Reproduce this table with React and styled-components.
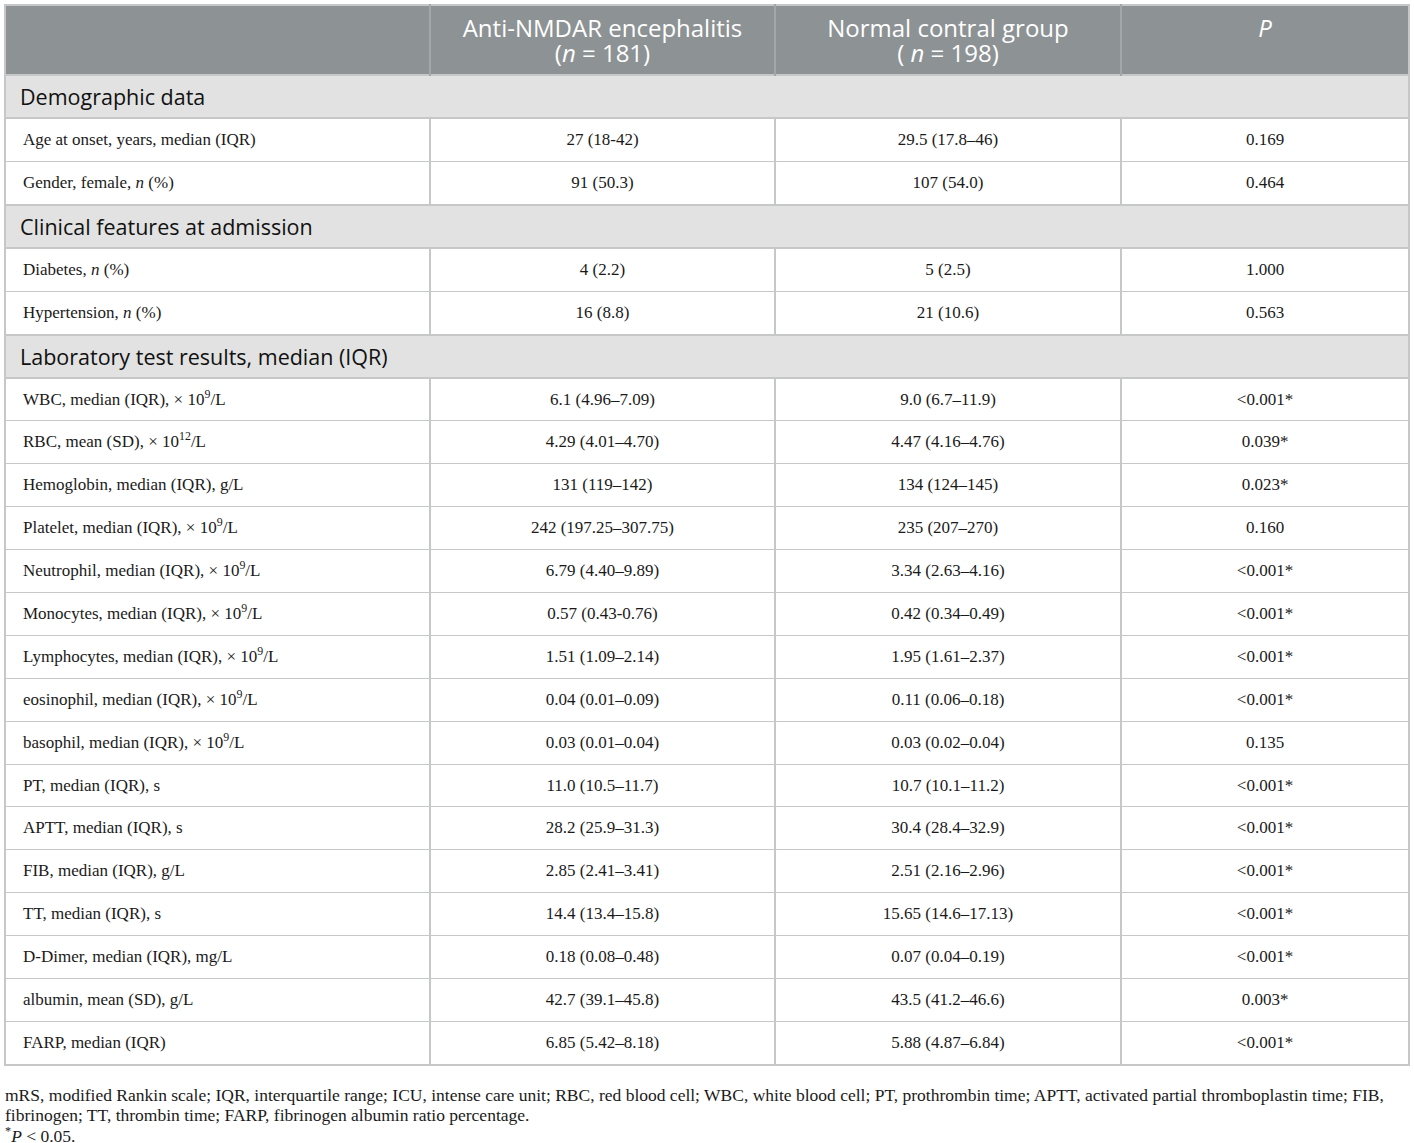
import React from "react";
import styled, { createGlobalStyle } from "styled-components";

const GlobalStyle = createGlobalStyle`
  html, body {
    margin: 0;
    padding: 0;
    background: #fff;
  }
`;

const Page = styled.div`
  padding: 4px 6px 0 4px;
  width: 1404px;
  font-family: "Liberation Serif", "Times New Roman", serif;
  color: #1a1a1a;
`;

const Table = styled.table`
  width: 1404px;
  border-collapse: collapse;
  table-layout: fixed;
  border: 2px solid #c6c8c7;
`;

const HeadCell = styled.th`
  background: #8d9295;
  color: #fff;
  font-family: "Open Sans", "Noto Sans", sans-serif;
  font-weight: 400;
  font-size: 24px;
  line-height: 25px;
  height: 70px;
  padding: 0 8px;
  text-align: center;
  vertical-align: top;
  padding-top: 9px;
  box-sizing: border-box;
  border-left: 2px solid #a3a7a9;
  &:first-child {
    border-left: none;
  }
`;

const SectionCell = styled.td`
  background: #e1e2e1;
  font-family: "Open Sans", "Noto Sans", sans-serif;
  font-size: 21.5px;
  color: #111;
  height: 41px;
  padding: 0 0 0 14px;
  border-top: 2px solid #c6c8c7;
  border-bottom: 2px solid #c6c8c7;
`;

const Cell = styled.td`
  height: 41.9px;
  font-size: 17px;
  padding: ${(p) => (p.$left ? "0 0 0 17px" : "0")};
  text-align: ${(p) => (p.$left ? "left" : "center")};
  border: 2px solid #c6c8c7;
  border-top-width: 1.5px;
  border-bottom-width: 1.5px;
  white-space: nowrap;
`;

const Sup = styled.sup`
  font-size: 0.7em;
  line-height: 0;
`;

const Footer = styled.div`
  margin-top: 19px;
  padding-left: 1px;
  font-size: 17.5px;
  line-height: 20.5px;
  color: #1a1a1a;
`;

const N = () => <i>n</i>;
const Pow = ({ e }) => (
  <>
    10<Sup>{e}</Sup>
  </>
);

const sections = [
  {
    title: "Demographic data",
    rows: [
      ["Age at onset, years, median (IQR)", "27 (18-42)", "29.5 (17.8–46)", "0.169"],
      [<>Gender, female, <N /> (%)</>, "91 (50.3)", "107 (54.0)", "0.464"],
    ],
  },
  {
    title: "Clinical features at admission",
    rows: [
      [<>Diabetes, <N /> (%)</>, "4 (2.2)", "5 (2.5)", "1.000"],
      [<>Hypertension, <N /> (%)</>, "16 (8.8)", "21 (10.6)", "0.563"],
    ],
  },
  {
    title: "Laboratory test results, median (IQR)",
    rows: [
      [<>WBC, median (IQR), × <Pow e="9" />/L</>, "6.1 (4.96–7.09)", "9.0 (6.7–11.9)", "<0.001*"],
      [<>RBC, mean (SD), × <Pow e="12" />/L</>, "4.29 (4.01–4.70)", "4.47 (4.16–4.76)", "0.039*"],
      ["Hemoglobin, median (IQR), g/L", "131 (119–142)", "134 (124–145)", "0.023*"],
      [<>Platelet, median (IQR), × <Pow e="9" />/L</>, "242 (197.25–307.75)", "235 (207–270)", "0.160"],
      [<>Neutrophil, median (IQR), × <Pow e="9" />/L</>, "6.79 (4.40–9.89)", "3.34 (2.63–4.16)", "<0.001*"],
      [<>Monocytes, median (IQR), × <Pow e="9" />/L</>, "0.57 (0.43-0.76)", "0.42 (0.34–0.49)", "<0.001*"],
      [<>Lymphocytes, median (IQR), × <Pow e="9" />/L</>, "1.51 (1.09–2.14)", "1.95 (1.61–2.37)", "<0.001*"],
      [<>eosinophil, median (IQR), × <Pow e="9" />/L</>, "0.04 (0.01–0.09)", "0.11 (0.06–0.18)", "<0.001*"],
      [<>basophil, median (IQR), × <Pow e="9" />/L</>, "0.03 (0.01–0.04)", "0.03 (0.02–0.04)", "0.135"],
      ["PT, median (IQR), s", "11.0 (10.5–11.7)", "10.7 (10.1–11.2)", "<0.001*"],
      ["APTT, median (IQR), s", "28.2 (25.9–31.3)", "30.4 (28.4–32.9)", "<0.001*"],
      ["FIB, median (IQR), g/L", "2.85 (2.41–3.41)", "2.51 (2.16–2.96)", "<0.001*"],
      ["TT, median (IQR), s", "14.4 (13.4–15.8)", "15.65 (14.6–17.13)", "<0.001*"],
      ["D-Dimer, median (IQR), mg/L", "0.18 (0.08–0.48)", "0.07 (0.04–0.19)", "<0.001*"],
      ["albumin, mean (SD), g/L", "42.7 (39.1–45.8)", "43.5 (41.2–46.6)", "0.003*"],
      ["FARP, median (IQR)", "6.85 (5.42–8.18)", "5.88 (4.87–6.84)", "<0.001*"],
    ],
  },
];

function App() {
  return (
    <Page>
      <GlobalStyle />
      <Table>
        <colgroup>
          <col style={{ width: "425px" }} />
          <col style={{ width: "345px" }} />
          <col style={{ width: "346px" }} />
          <col style={{ width: "288px" }} />
        </colgroup>
        <thead>
          <tr>
            <HeadCell />
            <HeadCell>
              Anti-NMDAR encephalitis
              <br />(<i>n</i> = 181)
            </HeadCell>
            <HeadCell>
              Normal contral group
              <br />( <i>n</i> = 198)
            </HeadCell>
            <HeadCell>
              <i>P</i>
            </HeadCell>
          </tr>
        </thead>
        <tbody>
          {sections.map((section) => (
            <React.Fragment key={section.title}>
              <tr>
                <SectionCell colSpan={4}>{section.title}</SectionCell>
              </tr>
              {section.rows.map((row, i) => (
                <tr key={i}>
                  {row.map((value, j) => (
                    <Cell key={j} $left={j === 0}>
                      {value}
                    </Cell>
                  ))}
                </tr>
              ))}
            </React.Fragment>
          ))}
        </tbody>
      </Table>
      <Footer>
        mRS, modified Rankin scale; IQR, interquartile range; ICU, intense care unit; RBC, red blood cell; WBC, white blood cell; PT, prothrombin time; APTT, activated partial thromboplastin time; FIB, fibrinogen; TT, thrombin time; FARP, fibrinogen albumin ratio percentage.
        <br />
        <Sup>*</Sup>
        <i>P</i> &lt; 0.05.
      </Footer>
    </Page>
  );
}

export default App;
